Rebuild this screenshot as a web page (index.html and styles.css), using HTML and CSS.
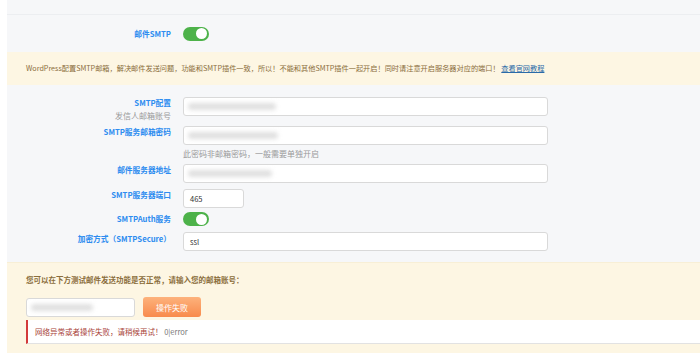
FILE: index.html
```html
<!DOCTYPE html>
<html lang="zh-CN">
<head>
<meta charset="utf-8">
<title>SMTP</title>
<link rel="stylesheet" href="styles.css">
</head>
<body>
<div class="page">
  <div class="topbar"></div>
  <div class="switch-row">
    <div class="label">邮件SMTP</div>
    <div class="toggle"><span class="knob"></span></div>
  </div>
  <div class="notice">WordPress配置SMTP邮箱，解决邮件发送问题，功能和SMTP插件一致，所以！不能和其他SMTP插件一起开启！同时请注意开启服务器对应的端口！ <a class="link" href="#">查看官网教程</a></div>

  <div class="form">
    <div class="field f1">
      <div class="lab"><div class="label">SMTP配置</div><div class="sub">发信人邮箱账号</div></div>
      <div class="ctl"><div class="input wide"><span class="blur b1"></span></div></div>
    </div>
    <div class="field f2">
      <div class="lab"><div class="label">SMTP服务邮箱密码</div></div>
      <div class="ctl"><div class="input wide"><span class="blur b2"></span></div><div class="hint">此密码非邮箱密码，一般需要单独开启</div></div>
    </div>
    <div class="field f3">
      <div class="lab"><div class="label">邮件服务器地址</div></div>
      <div class="ctl"><div class="input wide"><span class="blur b3"></span></div></div>
    </div>
    <div class="field f4">
      <div class="lab"><div class="label">SMTP服务器端口</div></div>
      <div class="ctl"><div class="input short">465</div></div>
    </div>
    <div class="field f5">
      <div class="lab"><div class="label">SMTPAuth服务</div></div>
      <div class="ctl"><div class="toggle"><span class="knob"></span></div></div>
    </div>
    <div class="field f6">
      <div class="lab"><div class="label">加密方式（SMTPSecure）</div></div>
      <div class="ctl"><div class="input wide">ssl</div></div>
    </div>
  </div>

  <div class="test">
    <div class="test-title">您可以在下方测试邮件发送功能是否正常，请输入您的邮箱账号：</div>
    <div class="test-row">
      <div class="input mail"><span class="blur b4"></span></div>
      <button class="btn">操作失败</button>
    </div>
    <div class="error"><span class="err-msg">网络异常或者操作失败，请稍候再试！</span> <span class="err-code">0|error</span></div>
  </div>
</div>
</body>
</html>
```
FILE: styles.css
```css
html, body {
  margin: 0;
  padding: 0;
  background: #ffffff;
  height: 100%;
  overflow: hidden;
}
body {
  font-family: "Noto Sans CJK SC", "Noto Sans", sans-serif;
  font-size: 7.5px;
}
.page {
  margin-left: 7px;
  background: #f6f7f9;
  min-height: 353px;
}
.topbar {
  height: 14px;
  border-bottom: 1px solid #eceef1;
}
.switch-row {
  height: 37px;
  display: flex;
  align-items: center;
}
.switch-row .label {
  width: 164px;
  text-align: right;
  margin-right: 12px;
}
.label {
  color: #2d8cf0;
  font-weight: 600;
  font-size: 7.7px;
  line-height: 10px;
}
.toggle {
  width: 26px;
  height: 14px;
  border-radius: 7px;
  background: #4db24a;
  position: relative;
}
.knob {
  position: absolute;
  right: 2px;
  top: 1.5px;
  width: 11px;
  height: 11px;
  border-radius: 50%;
  background: #ffffff;
}
.notice {
  height: 33px;
  background: #fdf6e3;
  color: #8a6d3b;
  padding-left: 19px;
  line-height: 33px;
  font-size: 7.2px;
  white-space: nowrap;
  overflow: hidden;
}
.link {
  color: #2a6aa8;
  text-decoration: underline;
}
.form {
  padding-top: 12px;
  padding-bottom: 11px;
}
.field {
  display: grid;
  grid-template-columns: 164px 1fr;
  column-gap: 12px;
}
.lab {
  text-align: right;
  padding-top: 1px;
}
.sub {
  color: #999999;
  font-size: 8px;
  margin-top: 3px;
  line-height: 10px;
}
.f1 { margin-bottom: 5px; }
.f2 { margin-bottom: 5px; }
.f3 { margin-bottom: 6px; }
.f4 { margin-bottom: 4px; }
.f5 { margin-bottom: 6px; }
.f5 .lab { padding-top: 2px; }
.f6 .lab { padding-top: 2px; }
.input {
  box-sizing: border-box;
  height: 19px;
  background: #ffffff;
  border: 1px solid #d9d9d9;
  border-radius: 3px;
  color: #333333;
  padding-left: 6px;
  line-height: 17px;
  position: relative;
  overflow: hidden;
}
.wide { width: 365px; }
.short { width: 61px; }
.hint {
  color: #999999;
  font-size: 8px;
  line-height: 10px;
  margin-top: 4px;
}
.blur {
  position: absolute;
  top: 5px;
  height: 7px;
  border-radius: 4px;
  background: #e0e0e0;
  filter: blur(2px);
}
.b1 { left: 4px; width: 88px; }
.b2 { left: 4px; width: 90px; }
.b3 { left: 4px; width: 84px; }
.b4 { left: 4px; width: 62px; }
.test {
  background: #fdf6e3;
  border-top: 1px solid #f8efd6;
  padding-left: 19px;
  padding-top: 12px;
  min-height: 90px;
}
.test-title {
  color: #8a6d3b;
  font-weight: bold;
  line-height: 10px;
}
.test-row {
  display: flex;
  align-items: center;
  gap: 8px;
  margin-top: 12px;
}
.mail {
  width: 109px;
}
.btn {
  width: 58px;
  height: 20px;
  border: 0;
  border-radius: 3px;
  background: linear-gradient(180deg, #fdb27c 0%, #f88a4c 100%);
  color: #ffffff;
  font-family: "Noto Sans CJK SC", "Noto Sans", sans-serif;
  font-size: 8px;
  padding: 0;
}
.error {
  margin-top: 3px;
  height: 24px;
  box-sizing: border-box;
  background: #ffffff;
  border-left: 2px solid #d33a3a;
  border-bottom: 1px solid #e2e2e2;
  padding-left: 7px;
  line-height: 23px;
}
.err-msg { color: #a9443a; }
.err-code { color: #777777; }
```
